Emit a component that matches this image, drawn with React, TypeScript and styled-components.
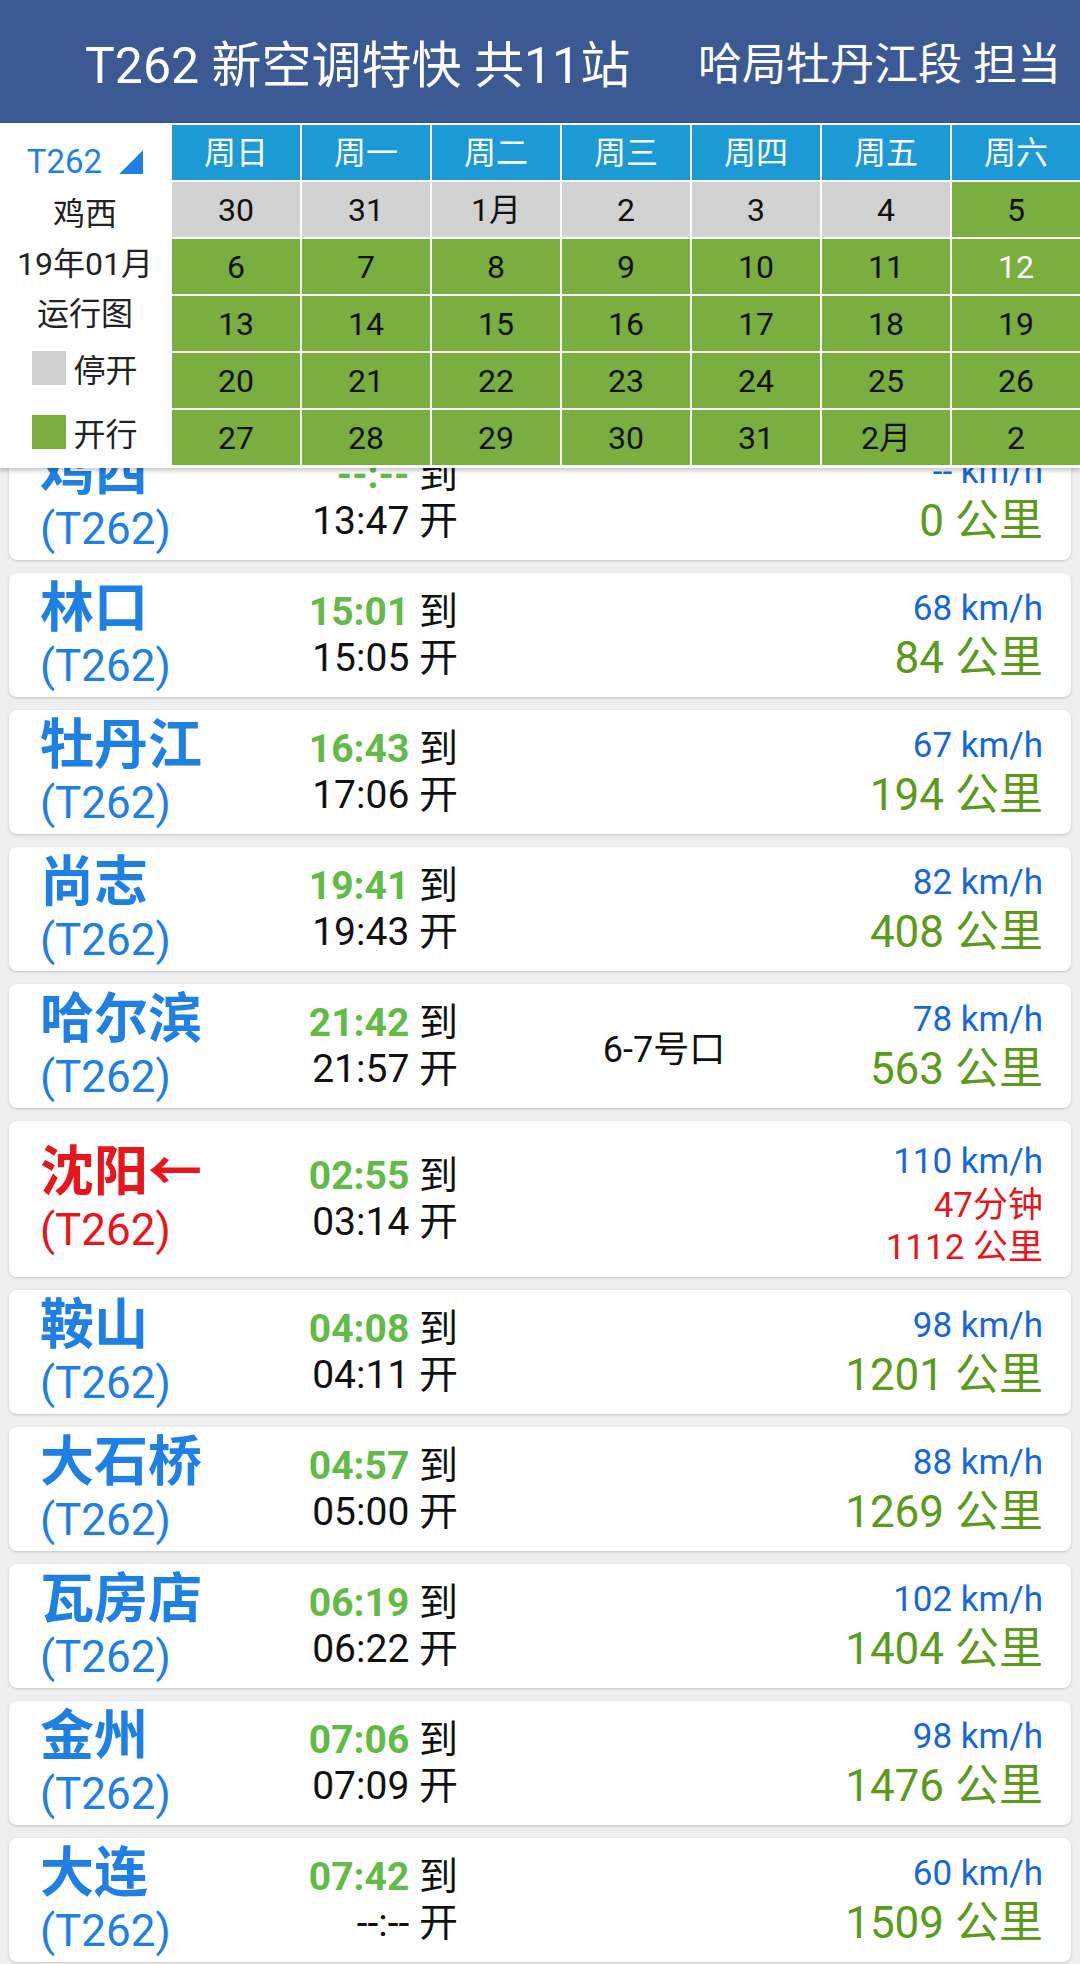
import * as React from 'react'
import styled, { createGlobalStyle } from 'styled-components'

const GlobalStyle = createGlobalStyle`
  html, body {
    margin: 0;
    padding: 0;
  }
  body {
    width: 1080px;
    height: 1964px;
    overflow: hidden;
    background: #efefef;
    font-family: Roboto, "Noto Sans CJK SC", sans-serif;
  }
`

const Page = styled.div`
  display: flex;
  flex-direction: column;
  width: 1080px;
  height: 1964px;
  overflow: hidden;
`

const TopBar = styled.header`
  display: flex;
  align-items: center;
  justify-content: space-between;
  height: 122px;
  padding: 0 19px 0 85px;
  background: #3b5a93;
  border-bottom: 1px solid #34518a;
  color: #fff;
  white-space: nowrap;
`

const Title = styled.div`
  font-size: 50px;
`

const Duty = styled.div`
  font-size: 44px;
`

const CalendarPanel = styled.section`
  position: relative;
  z-index: 1;
  display: flex;
  height: 345px;
  background: #fff;
  box-shadow: 0 3px 4px rgba(0, 0, 0, 0.2);
`

const Legend = styled.div`
  display: flex;
  flex-direction: column;
  width: 170px;
  padding-top: 13px;
`

const LegendLine = styled.div<{ $h: number; $blue?: boolean }>`
  display: flex;
  align-items: center;
  justify-content: center;
  gap: 7px;
  height: ${p => p.$h}px;
  font-size: 32px;
  color: ${p => (p.$blue ? '#1e7fe5' : '#222')};
  white-space: nowrap;
`

const TrainTag = styled.span`
  font-size: 33px;
  margin-right: 10px;
`

const Corner = styled.span`
  width: 24px;
  height: 24px;
  margin-top: 2px;
  background: #1e7fe5;
  clip-path: polygon(100% 0, 100% 100%, 0 100%);
`

const Swatch = styled.span<{ $run: boolean }>`
  width: 34px;
  height: 34px;
  background: ${p => (p.$run ? '#7aae3e' : '#d0d0d0')};
`

const Grid = styled.div`
  display: grid;
  grid-template-columns: repeat(7, 128px);
  grid-auto-rows: 55px;
  gap: 2px;
  padding: 2px 0 3px 2px;
`

const HeadCell = styled.div`
  display: flex;
  align-items: center;
  justify-content: center;
  background: #1b9ad6;
  color: #fff;
  font-size: 32px;
  line-height: 32px;
`

const DayCell = styled.div<{ $run: boolean; $today?: boolean }>`
  display: flex;
  align-items: center;
  justify-content: center;
  background: ${p => (p.$run ? '#7aae3e' : '#d2d2d2')};
  color: ${p => (p.$today ? '#fff' : '#111')};
  font-size: 32px;
  line-height: 32px;
`

const ListViewport = styled.main`
  flex: 1;
  overflow: hidden;
  background: #efefef;
`

const ListTrack = styled.div`
  display: flex;
  flex-direction: column;
  gap: 13px;
  margin-top: -32px;
  padding: 0 9px;
`

const Card = styled.div<{ $tall?: boolean }>`
  display: flex;
  align-items: center;
  height: ${p => (p.$tall ? 156 : 124)}px;
  padding: 0 28px 0 31px;
  background: #fff;
  border-radius: 8px;
  box-shadow: 0 1px 3px rgba(0, 0, 0, 0.18);
  white-space: nowrap;
`

const NameCol = styled.div<{ $alert?: boolean }>`
  flex: 0 0 200px;
  color: ${p => (p.$alert ? '#e8161b' : '#1e7fe5')};
`

const StationName = styled.div`
  font-family: "Noto Sans CJK SC", sans-serif;
  font-size: 54px;
  font-weight: 700;
  line-height: 62px;
`

const TrainNo = styled.div`
  font-size: 44px;
  line-height: 62px;
`

const TimeCol = styled.div`
  flex: 0 0 218px;
  text-align: right;
`

const TimeLine = styled.div`
  font-size: 39px;
  line-height: 46px;
  color: #111;
`

const Arrive = styled.span`
  font-weight: 700;
  color: #62bb46;
`

const MiddleCol = styled.div`
  flex: 1;
  text-align: center;
  font-size: 36px;
  color: #111;
`

const RightCol = styled.div<{ $alert?: boolean }>`
  flex: none;
  padding-top: ${p => (p.$alert ? 10 : 0)}px;
  text-align: right;
`

const Speed = styled.div<{ $alert?: boolean }>`
  font-size: 35px;
  line-height: ${p => (p.$alert ? 44 : 46)}px;
  color: #1667dc;
`

const Distance = styled.div<{ $alert?: boolean }>`
  font-size: ${p => (p.$alert ? 35 : 44)}px;
  line-height: ${p => (p.$alert ? 40 : 52)}px;
  color: ${p => (p.$alert ? '#e8161b' : '#5b9a1a')};
`

const Stop = styled.div`
  font-size: 35px;
  line-height: 44px;
  color: #e8161b;
`

const weekDays = ['周日', '周一', '周二', '周三', '周四', '周五', '周六']

type Day = { d: string; run: boolean; today?: boolean }

const days: Day[] = [
  ...['30', '31', '1月', '2', '3', '4'].map(d => ({ d, run: false })),
  { d: '5', run: true },
  ...['6', '7', '8', '9', '10', '11'].map(d => ({ d, run: true })),
  { d: '12', run: true, today: true },
  ...[
    '13', '14', '15', '16', '17', '18', '19',
    '20', '21', '22', '23', '24', '25', '26',
    '27', '28', '29', '30', '31', '2月', '2',
  ].map(d => ({ d, run: true })),
]

type Station = {
  name: string
  arr: string
  dep: string
  speed: string
  km: number
  gate?: string
  stopover?: string
  alert?: boolean
}

const stations: Station[] = [
  { name: '鸡西', arr: '--:--', dep: '13:47', speed: '--', km: 0 },
  { name: '林口', arr: '15:01', dep: '15:05', speed: '68', km: 84 },
  { name: '牡丹江', arr: '16:43', dep: '17:06', speed: '67', km: 194 },
  { name: '尚志', arr: '19:41', dep: '19:43', speed: '82', km: 408 },
  { name: '哈尔滨', arr: '21:42', dep: '21:57', speed: '78', km: 563, gate: '6-7号口' },
  { name: '沈阳←', arr: '02:55', dep: '03:14', speed: '110', km: 1112, stopover: '47分钟', alert: true },
  { name: '鞍山', arr: '04:08', dep: '04:11', speed: '98', km: 1201 },
  { name: '大石桥', arr: '04:57', dep: '05:00', speed: '88', km: 1269 },
  { name: '瓦房店', arr: '06:19', dep: '06:22', speed: '102', km: 1404 },
  { name: '金州', arr: '07:06', dep: '07:09', speed: '98', km: 1476 },
  { name: '大连', arr: '07:42', dep: '--:--', speed: '60', km: 1509 },
]

const StationCard = ({ s }: { s: Station }) => (
  <Card $tall={s.alert}>
    <NameCol $alert={s.alert}>
      <StationName>{s.name}</StationName>
      <TrainNo>(T262)</TrainNo>
    </NameCol>
    <TimeCol>
      <TimeLine>
        <Arrive>{s.arr}</Arrive> 到
      </TimeLine>
      <TimeLine>{s.dep} 开</TimeLine>
    </TimeCol>
    <MiddleCol>{s.gate}</MiddleCol>
    <RightCol $alert={s.alert}>
      <Speed $alert={s.alert}>{s.speed} km/h</Speed>
      {s.stopover && <Stop>{s.stopover}</Stop>}
      <Distance $alert={s.alert}>{s.km} 公里</Distance>
    </RightCol>
  </Card>
)

export default function App() {
  return (
    <>
      <GlobalStyle />
      <Page>
        <TopBar>
          <Title>T262 新空调特快 共11站</Title>
          <Duty>哈局牡丹江段 担当</Duty>
        </TopBar>
        <CalendarPanel>
          <Legend>
            <LegendLine $h={50} $blue>
              <TrainTag>T262</TrainTag>
              <Corner />
            </LegendLine>
            <LegendLine $h={50}>鸡西</LegendLine>
            <LegendLine $h={50}>19年01月</LegendLine>
            <LegendLine $h={50}>运行图</LegendLine>
            <LegendLine $h={64}>
              <Swatch $run={false} />
              停开
            </LegendLine>
            <LegendLine $h={64}>
              <Swatch $run />
              开行
            </LegendLine>
          </Legend>
          <Grid>
            {weekDays.map(w => (
              <HeadCell key={w}>{w}</HeadCell>
            ))}
            {days.map((day, i) => (
              <DayCell key={i} $run={day.run} $today={day.today}>
                {day.d}
              </DayCell>
            ))}
          </Grid>
        </CalendarPanel>
        <ListViewport>
          <ListTrack>
            {stations.map(s => (
              <StationCard key={s.name} s={s} />
            ))}
          </ListTrack>
        </ListViewport>
      </Page>
    </>
  )
}
